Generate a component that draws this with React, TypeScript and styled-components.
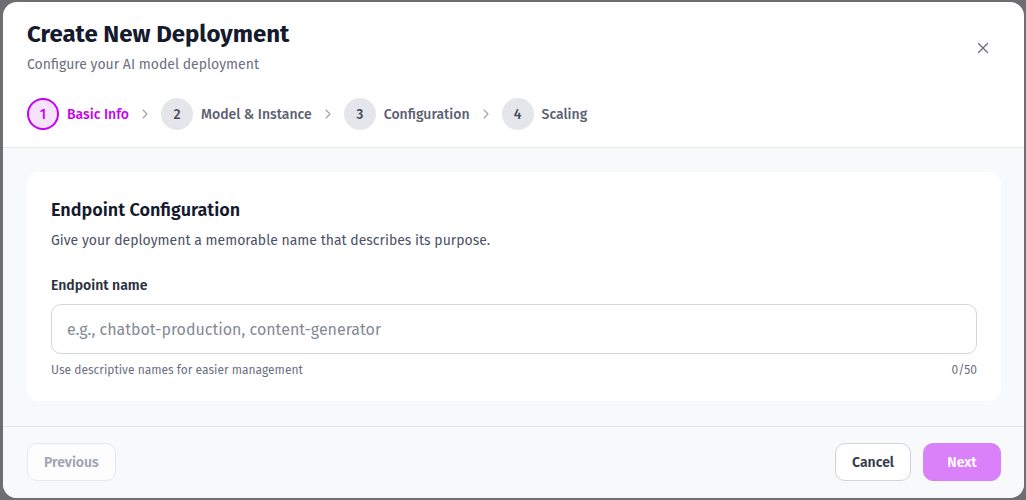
import { createGlobalStyle, styled } from 'styled-components'
import { ChevronRight, X } from 'lucide-react'

const GlobalStyle = createGlobalStyle`
  html, body {
    margin: 0;
    padding: 0;
    background: #6e6e72;
  }
  body {
    font-family: 'Fira Sans', 'Lato', 'Open Sans', sans-serif;
    -webkit-font-smoothing: antialiased;
  }
  * { box-sizing: border-box; }
`

const steps = ['Basic Info', 'Model & Instance', 'Configuration', 'Scaling']

export default function App() {
  const current = 0
  return (
    <>
      <GlobalStyle />
      <Modal>
        <Header>
          <TitleRow>
            <div>
              <Title>Create New Deployment</Title>
              <Subtitle>Configure your AI model deployment</Subtitle>
            </div>
            <CloseButton aria-label="Close">
              <X size={18} strokeWidth={1.8} />
            </CloseButton>
          </TitleRow>
          <Steps>
            {steps.map((label, i) => (
              <Step key={label}>
                <StepCircle $active={i === current}>{i + 1}</StepCircle>
                <StepLabel $active={i === current}>{label}</StepLabel>
                {i < steps.length - 1 && (
                  <Chevron>
                    <ChevronRight size={16} strokeWidth={1.6} />
                  </Chevron>
                )}
              </Step>
            ))}
          </Steps>
        </Header>

        <Body>
          <Card>
            <CardTitle>Endpoint Configuration</CardTitle>
            <CardText>Give your deployment a memorable name that describes its purpose.</CardText>
            <Label htmlFor="endpoint">Endpoint name</Label>
            <Input id="endpoint" placeholder="e.g., chatbot-production, content-generator" />
            <HelpRow>
              <span>Use descriptive names for easier management</span>
              <span>0/50</span>
            </HelpRow>
          </Card>
        </Body>

        <Footer>
          <Button $variant="ghost" disabled>Previous</Button>
          <FooterRight>
            <Button $variant="outline">Cancel</Button>
            <Button $variant="primary">Next</Button>
          </FooterRight>
        </Footer>
      </Modal>
    </>
  )
}

// Styled components
const Modal = styled.div`
  margin: 2px 2px 2px 3px;
  height: 496px;
  background: #fff;
  border-radius: 14px;
  overflow: hidden;
  display: flex;
  flex-direction: column;
`

const Header = styled.header`
  padding: 16px 24px 17px;
  border-bottom: 1px solid #e5e7eb;
`

const TitleRow = styled.div`
  display: flex;
  justify-content: space-between;
  align-items: center;
`

const Title = styled.h2`
  margin: 0;
  font-size: 24px;
  line-height: 32px;
  font-weight: 700;
  color: #151a2d;
`

const Subtitle = styled.p`
  margin: 5px 0 0;
  font-size: 14px;
  line-height: 20px;
  color: #6b7080;
`

const CloseButton = styled.button`
  border: none;
  background: transparent;
  color: #6b7080;
  padding: 4px;
  margin: 2px 4px 0 0;
  display: flex;
  cursor: pointer;
`

const Steps = styled.div`
  margin-top: 23px;
  display: flex;
  align-items: center;
`

const Step = styled.div`
  display: flex;
  align-items: center;
`

const StepCircle = styled.div<{ $active?: boolean }>`
  width: 32px;
  height: 32px;
  border-radius: 50%;
  display: flex;
  align-items: center;
  justify-content: center;
  font-size: 14px;
  font-weight: 500;
  color: ${(p) => (p.$active ? '#c400ee' : '#454b5c')};
  background: ${(p) => (p.$active ? '#f7e2fd' : '#e5e6eb')};
  border: ${(p) => (p.$active ? '2px solid #c800f2' : 'none')};
`

const StepLabel = styled.span<{ $active?: boolean }>`
  margin-left: 8px;
  font-size: 14px;
  font-weight: 500;
  color: ${(p) => (p.$active ? '#c800f0' : '#5c6172')};
`

const Chevron = styled.span`
  display: flex;
  color: #9ca0ad;
  margin: 0 8px 0 8px;
`

const Body = styled.main`
  flex: 1;
  background: #f8f9fb;
  padding: 24px 23px 24px 24px;
`

const Card = styled.section`
  background: #fff;
  border-radius: 12px;
  padding: 24px 24px 23px;
`

const CardTitle = styled.h3`
  margin: 0;
  font-size: 18px;
  line-height: 28px;
  font-weight: 600;
  color: #151a2d;
`

const CardText = styled.p`
  margin: 7px 0 0;
  font-size: 14px;
  line-height: 20px;
  color: #4c5264;
`

const Label = styled.label`
  display: block;
  margin-top: 25px;
  font-size: 14px;
  line-height: 20px;
  font-weight: 600;
  color: #2d3242;
`

const Input = styled.input`
  display: block;
  width: 100%;
  height: 50px;
  margin-top: 8px;
  padding: 0 15px;
  border: 1px solid #d4d5dd;
  border-radius: 10px;
  font-family: inherit;
  font-size: 16px;
  color: #151a2d;
  outline: none;
  &::placeholder {
    color: #858a97;
  }
`

const HelpRow = styled.div`
  margin-top: 8px;
  display: flex;
  justify-content: space-between;
  font-size: 12px;
  line-height: 16px;
  color: #6b7080;
`

const Footer = styled.footer`
  border-top: 1px solid #e5e7eb;
  background: #f8f9fb;
  padding: 16px 23px 17px 24px;
  display: flex;
  justify-content: space-between;
  align-items: center;
`

const FooterRight = styled.div`
  display: flex;
  gap: 12px;
`

const Button = styled.button<{ $variant: 'ghost' | 'outline' | 'primary' }>`
  height: 38px;
  padding: 0 16px;
  border-radius: 10px;
  font-family: inherit;
  font-size: 14px;
  font-weight: 600;
  cursor: pointer;
  border: 1px solid
    ${(p) => (p.$variant === 'primary' ? '#da80f8' : p.$variant === 'outline' ? '#d1d3da' : '#e5e7eb')};
  background: ${(p) => (p.$variant === 'primary' ? '#da80f8' : p.$variant === 'outline' ? '#fff' : '#fdfdfe')};
  color: ${(p) => (p.$variant === 'primary' ? '#fff' : p.$variant === 'outline' ? '#353a4a' : '#a0a4b0')};
  min-width: ${(p) => (p.$variant === 'primary' ? '78px' : 'auto')};
  &:disabled {
    cursor: default;
  }
`
